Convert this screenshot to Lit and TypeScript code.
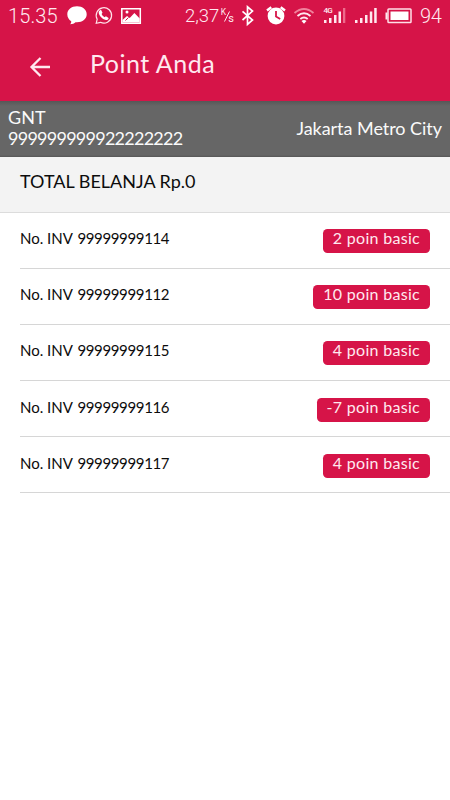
import { LitElement, html, css } from "lit";
import { customElement } from "lit/decorators.js";

interface Invoice {
  no: string;
  points: string;
}

const invoices: Invoice[] = [
  { no: "99999999114", points: "2" },
  { no: "99999999112", points: "10" },
  { no: "99999999115", points: "4" },
  { no: "99999999116", points: "-7" },
  { no: "99999999117", points: "4" },
];

@customElement("status-bar")
class StatusBar extends LitElement {
  static styles = css`
    :host {
      display: block;
      height: 32px;
      color: #ffe9ef;
      font: 300 20px/32px Roboto, sans-serif;
    }
    .bar {
      display: flex;
      justify-content: space-between;
      padding: 0 8px;
      height: 32px;
    }
    .side {
      display: flex;
      align-items: center;
    }
    .time {
      width: 59px;
      font-size: 20px;
      letter-spacing: 0.1px;
    }
    .speed {
      width: 35px;
      font-size: 18.5px;
    }
    .level {
      width: 22px;
      margin-left: 5px;
      font-size: 20px;
      letter-spacing: -0.3px;
    }
    svg {
      display: block;
      flex: none;
    }
  `;

  render() {
    return html`
      <div class="bar">
        <div class="side">
          <span class="time">15.35</span>
          <svg width="75" height="22" viewBox="67 5 75 22">
            <path fill="#fff" d="M77 6.2c5.600 0 9.700 3.300 9.700 8s-4.100 8-9.700 8h-1.500c-1 1-3 2-5.300 2 .8-1 1.200-2 1-3-2.300-1.500-3.900-4-3.900-7 0-4.700 4.100-8 9.700-8z" />
            <path fill="none" stroke="#ffe3ea" stroke-width="1.200" d="M96.200 23.300l1-4.100a7.700 7.700 0 1 1 3.300 3.100z" />
            <path fill="#fff" d="M99.600 10.600l1.400-.8 1.500 3-.9 1.300c.7 1.500 1.700 2.500 3 3.200l1.300-1 2.700 1.600c-.1 1.500-1.400 2.200-2.700 2-3.900-.7-7-4.300-7.200-7.400 0-.8.400-1.500.9-1.900z" />
            <path fill="none" stroke="#fff" stroke-width="1.500" d="M121.800 8.700h18.500v14.600h-18.500z" />
            <circle cx="127" cy="12" r="1.500" fill="#fff" />
            <path fill="#fff" d="M122.500 22.500v-2.500l4.500-4 2.700 2 4.700-5 5.300 5.500v4z" />
            <path stroke="#d61448" d="M125.500 20.500l3-3" />
          </svg>
        </div>
        <div class="side">
          <span class="speed">2,37</span>
          <svg width="195" height="22" viewBox="220 5 195 22">
            <text x="220.800" y="15" font-family="Roboto" font-size="8.500" font-weight="400" fill="#ffe9ef">K</text>
            <text x="228.200" y="21.800" font-family="Roboto" font-size="11" font-weight="400" fill="#ffe9ef">s</text>
            <path stroke="#ffe9ef" d="M224.500 21.500l5-10" />
            <path fill="none" stroke="#fff" stroke-width="1.700" d="M242.500 11.300l10 8.700-5 4.300V6.800l5 4.300-10 8.900" />
            <circle cx="276" cy="16" r="8.400" fill="#fff" />
            <path fill="none" stroke="#fff" stroke-width="2.400" d="M267 10.500l4.300-3.300M285 10.500l-4.300-3.300" />
            <path fill="none" stroke="#d61448" stroke-width="1.800" d="M276 11v5.500l4.200 2.500" />
            <g fill="none" stroke="#ffeaf0" stroke-width="1.900">
              <path stroke="#f0829c" d="M294.500 12.900q9.500-8 19 0" />
              <path d="M297.500 16q6.500-5.500 13 0M300.300 19q3.700-3 7.400 0" />
            </g>
            <path fill="#fff" d="M301.500 21q2.500-2 5 0l-2.500 2.700z" />
            <text x="323.500" y="13" font-family="Roboto" font-size="8" font-weight="500" letter-spacing="-.7" fill="#ffeaf0">4G</text>
            <path fill="#ffe9ef" d="M324 20h2.500v3H324zM329 18h2.500v5H329zM334 15h2.500v8H334zM338.500 11.500h2.500V23h-2.500z" />
            <path fill="#ed6c8c" d="M343 8h2.300v15H343z" />
            <path fill="#ffe9ef" d="M355 20h2.500v3H355zM360 18h2.500v5H360zM365 15h2.500v8H365zM369.800 11.500h2.500V23h-2.500zM374.200 8h2.500v15h-2.500z" />
            <rect x="388" y="9" width="23" height="13.500" rx=".8" fill="none" stroke="#ffe0e8" stroke-width="1.500" />
            <path fill="#ffe9ef" d="M385.500 12.500h2v7h-2z" />
            <path fill="#fff" d="M390.500 11.500h18V20h-18z" />
          </svg>
          <span class="level">94</span>
        </div>
      </div>
    `;
  }
}

@customElement("invoice-row")
class InvoiceRow extends LitElement {
  static properties = { invoice: { attribute: false } };
  declare invoice: Invoice;

  static styles = css`
    :host {
      display: flex;
      justify-content: space-between;
      box-sizing: border-box;
      height: 56.200px;
      margin-left: 20px;
      padding: 16.500px 20px 0 0;
      border-bottom: 1px solid #d6d6d6;
    }
    .label {
      display: flex;
      gap: 4.500px;
      margin-top: -1px;
      font-size: 15px;
      line-height: 20px;
      color: #0c0c0c;
    }
    .number {
      letter-spacing: -0.360px;
    }
    .badge {
      box-sizing: border-box;
      height: 24px;
      padding: 0 10px;
      border-radius: 4.500px;
      background: #d61448;
      color: #ffe9ef;
      font-size: 16px;
      line-height: 18.500px;
      letter-spacing: 0.300px;
    }
  `;

  render() {
    return html`
      <div class="label"><span>No. INV</span><span class="number">${this.invoice.no}</span></div>
      <span class="badge">${this.invoice.points} poin basic</span>
    `;
  }
}

@customElement("app-root")
class AppRoot extends LitElement {
  static styles = css`
    :host {
      display: block;
      height: 800px;
      overflow: hidden;
      background: #fff;
      font-family: Lato, sans-serif;
    }
    .header {
      height: 101px;
      background: #d61448;
    }
    .toolbar {
      display: flex;
      align-items: center;
      height: 69px;
      padding-left: 29px;
      color: #ffe9ef;
    }
    .title {
      margin: 0 0 7px 39px;
      font-size: 25px;
      font-weight: 400;
      line-height: 32px;
      letter-spacing: 0.500px;
    }
    .account {
      display: flex;
      justify-content: space-between;
      align-items: center;
      box-sizing: border-box;
      height: 56px;
      padding: 0 8px 2px;
      background: linear-gradient(#575757, #666 5px, #666 54px, #565656);
      color: #fafafa;
      font-size: 18px;
      line-height: 21px;
    }
    .member {
      letter-spacing: -0.750px;
    }
    .city {
      letter-spacing: -0.040px;
    }
    .total {
      box-sizing: border-box;
      height: 55.500px;
      padding: 13px 20px 0;
      border-bottom: 1px solid #dcdcdc;
      background: #f3f3f3;
      color: #0c0c0c;
      font-size: 18px;
      line-height: 22px;
    }
  `;

  render() {
    return html`
      <div class="header">
        <status-bar></status-bar>
        <div class="toolbar">
          <svg width="22" height="22" viewBox="0 0 22 22" fill="none" stroke="#ffe9ef" stroke-width="2.300">
            <path d="M21 11H3M11.500 2L2.500 11l9 9" />
          </svg>
          <h1 class="title">Point Anda</h1>
        </div>
      </div>
      <div class="account">
        <div>
          <div>GNT</div>
          <div class="member">999999999922222222</div>
        </div>
        <div class="city">Jakarta Metro City</div>
      </div>
      <div class="total">TOTAL BELANJA Rp.0</div>
      ${invoices.map((i) => html`<invoice-row .invoice=${i}></invoice-row>`)}
    `;
  }
}
